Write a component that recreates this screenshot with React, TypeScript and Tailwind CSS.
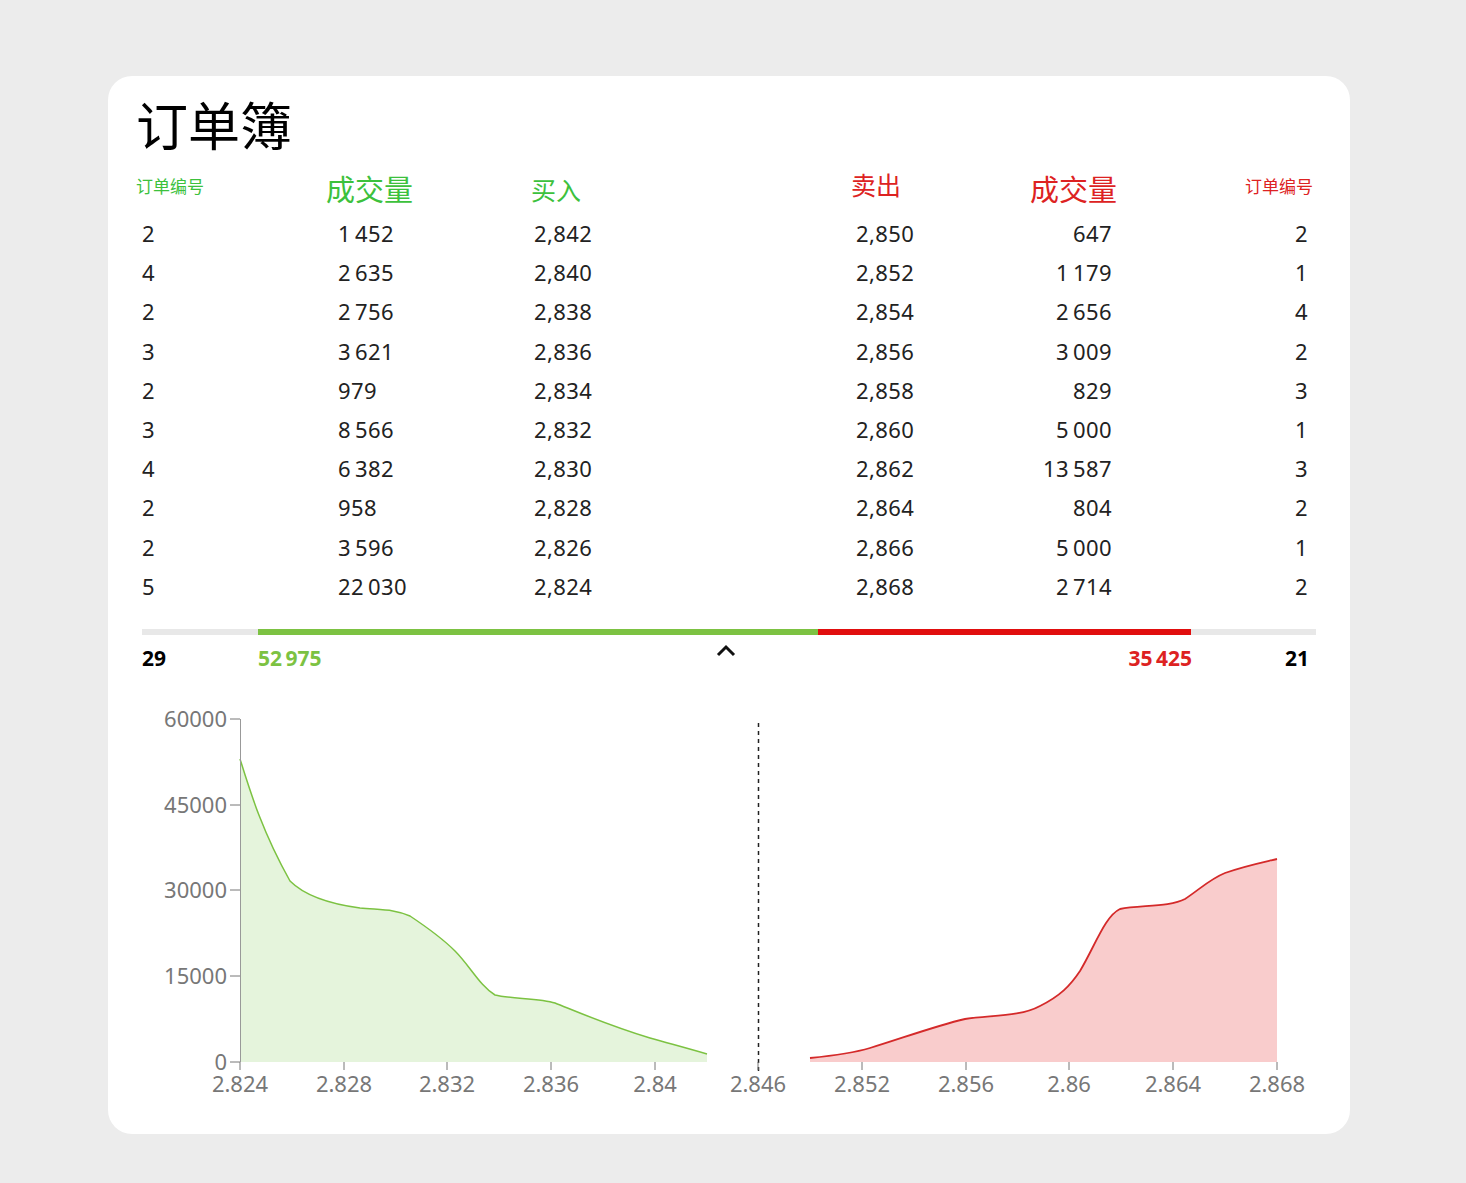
import React from "react";

const buys = [
  ["2", "1\u2009452", "2,842"], ["4", "2\u2009635", "2,840"], ["2", "2\u2009756", "2,838"], ["3", "3\u2009621", "2,836"],
  ["2", "979", "2,834"], ["3", "8\u2009566", "2,832"], ["4", "6\u2009382", "2,830"], ["2", "958", "2,828"],
  ["2", "3\u2009596", "2,826"], ["5", "22\u2009030", "2,824"],
];
const sells = [
  ["2,850", "647", "2"], ["2,852", "1\u2009179", "1"], ["2,854", "2\u2009656", "4"], ["2,856", "3\u2009009", "2"],
  ["2,858", "829", "3"], ["2,860", "5\u2009000", "1"], ["2,862", "13\u2009587", "3"], ["2,864", "804", "2"],
  ["2,866", "5\u2009000", "1"], ["2,868", "2\u2009714", "2"],
];

const font = { fontFamily: '"Noto Sans", "Noto Sans CJK SC", sans-serif' };

const green = "M240,758 C250,790 262,830 290,880 C305,895 330,903 360,907 C380,909 395,908 410,915 C425,925 440,935 455,950 C470,965 480,985 495,994 C510,998 540,997 555,1002 C580,1012 610,1025 650,1037 C675,1044 690,1048 707,1053";
const red = "M810,1057 C830,1055 850,1053 870,1047 C900,1038 935,1025 965,1018 C990,1014 1020,1016 1040,1005 C1060,995 1070,985 1080,970 C1095,945 1105,915 1120,908 C1140,904 1170,906 1185,898 C1200,888 1210,878 1225,872 C1245,865 1260,862 1277,858";

export default function App() {
  return (
    <div className="min-h-[1183px] w-[1466px] bg-[#ececec] pt-[76px] pl-[108px]" style={font}>
      <div className="w-[1242px] h-[1058px] bg-white rounded-[24px] flex flex-col">
        <div className="pl-[28px] pt-[20px] text-[52px] leading-[60px] text-black">订单簿</div>
        <div className="mt-[18px] h-[40px] pl-[28px] pr-[37px] flex items-start">
          <span className="w-[190px] text-[17px] text-[#3cc13c]">订单编号</span>
          <span className="w-[205px] text-[29px] leading-[36px] mt-[-2px] text-[#3cc13c]">成交量</span>
          <span className="w-[320px] text-[25px] leading-[32px] text-[#3cc13c]">买入</span>
          <span className="w-[100px] text-[25px] leading-[30px] mt-[-4px] text-[#dd2222]">卖出</span>
          <span className="flex-1 text-right text-[29px] leading-[36px] mt-[-2px] text-[#dd2222]">成交量</span>
          <span className="w-[196px] text-right text-[17px] text-[#dd2222]">订单编号</span>
        </div>
        <div className="flex flex-col text-[22px] tracking-[0.4px] text-[#222] pl-[34px] pr-[42px]">
          {buys.map((b, i) => (
            <div key={i} className="h-[39.2px] flex items-center">
              <span className="w-[196px]">{b[0]}</span>
              <span className="w-[196px]">{b[1]}</span>
              <span className="w-[322px]">{b[2]}</span>
              <span className="w-[100px]">{sells[i][0]}</span>
              <span className="flex-1 text-right">{sells[i][1]}</span>
              <span className="w-[196px] text-right">{sells[i][2]}</span>
            </div>
          ))}
        </div>
        <div className="mt-[23px] mx-[34px] flex h-[6px]">
          <div className="w-[116px] bg-[#e8e8e8]" />
          <div className="w-[560px] bg-[#7cc242]" />
          <div className="w-[373px] bg-[#e10e0e]" />
          <div className="flex-1 bg-[#e8e8e8]" />
        </div>
        <div className="h-[40px] pt-[8px] pl-[34px] pr-[41px] flex items-start text-[21px] font-bold">
          <span className="w-[116px] text-black">29</span>
          <span className="w-[457px] text-[#7cc242]">52&#8201;975</span>
          <svg className="mt-[1px]" width="22" height="14" viewBox="0 0 22 14">
            <path d="M3,11 L11,3 L19,11" fill="none" stroke="#111" strokeWidth="3" />
          </svg>
          <span className="flex-1 text-right text-[#dd2222]">35&#8201;425</span>
          <span className="w-[117px] text-right text-black">21</span>
        </div>
        <svg className="mt-[26px]" width="1242" height="410" viewBox="108 700 1242 410" style={font}>
          <path d={green + " L707,1061 L240,1061 Z"} fill="#e5f4dc" />
          <path d={green} fill="none" stroke="#7cc242" strokeWidth="1.5" />
          <path d={red + " L1277,1061 L810,1061 Z"} fill="#f9cccc" />
          <path d={red} fill="none" stroke="#d42a2a" strokeWidth="1.8" />
          <line x1="240.5" y1="718" x2="240.5" y2="1061" stroke="#999" strokeWidth="1" />
          <line x1="758.5" y1="722" x2="758.5" y2="1072" stroke="#222" strokeWidth="1.5" strokeDasharray="4 4" />
          {[[60000, 718], [45000, 804], [30000, 889], [15000, 975], [0, 1061]].map(([v, y]) => (
            <g key={v}>
              <line x1="230" y1={y} x2="240" y2={y} stroke="#777" />
              <text x="227" y={y + 8} textAnchor="end" fontSize="22" fill="#777">{v}</text>
            </g>
          ))}
          {[["2.824", 240], ["2.828", 344], ["2.832", 447], ["2.836", 551], ["2.84", 655], ["2.846", 758], ["2.852", 862], ["2.856", 966], ["2.86", 1069], ["2.864", 1173], ["2.868", 1277]].map(([l, x]) => (
            <g key={l as string}>
              <line x1={x as number} y1="1061" x2={x as number} y2="1069" stroke="#777" />
              <text x={x as number} y="1091" textAnchor="middle" fontSize="22" fill="#777">{l}</text>
            </g>
          ))}
        </svg>
      </div>
    </div>
  );
}
